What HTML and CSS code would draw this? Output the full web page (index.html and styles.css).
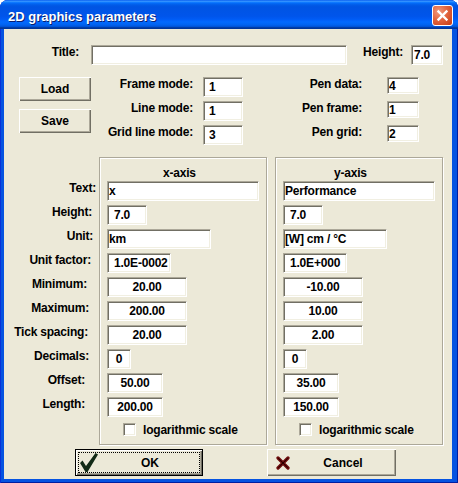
FILE: index.html
```html
<!DOCTYPE html>
<html>
<head>
<meta charset="utf-8">
<link rel="stylesheet" href="styles.css">
</head>
<body>
<div class="window">
  <div class="titlebar">
    <span class="title">2D graphics parameters</span>
    <div class="close">
      <svg width="19" height="19" viewBox="0 0 19 19"><path d="M5.5 5.5 L13.5 13.5 M13.5 5.5 L5.5 13.5" stroke="#fff" stroke-width="2.4" stroke-linecap="square"/></svg>
    </div>
  </div>
  <div class="client">
    <div class="row-title">
      <span class="lbl lbl-title">Title:</span>
      <input class="edit w256" value="">
      <span class="lbl lbl-height">Height:</span>
      <input class="edit w32 pad2" value="7.0">
    </div>

    <div class="mid">
      <div class="btncol">
        <button class="btn">Load</button>
        <button class="btn">Save</button>
      </div>
      <div class="modes">
        <div class="mrow"><span class="lbl mlbl">Frame mode:</span><input class="edit mode" value="1"></div>
        <div class="mrow"><span class="lbl mlbl">Line mode:</span><input class="edit mode" value="1"></div>
        <div class="mrow"><span class="lbl mlbl">Grid line mode:</span><input class="edit mode" value="3"></div>
      </div>
      <div class="pens">
        <div class="mrow"><span class="lbl plbl">Pen data:</span><input class="edit pen" value="4"></div>
        <div class="mrow"><span class="lbl plbl">Pen frame:</span><input class="edit pen" value="1"></div>
        <div class="mrow"><span class="lbl plbl">Pen grid:</span><input class="edit pen" value="2"></div>
      </div>
    </div>

    <div class="axes">
      <div class="labels">
        <div class="alabel r92">Text:</div>
        <div class="alabel r88">Height:</div>
        <div class="alabel r89">Unit:</div>
        <div class="alabel r87">Unit factor:</div>
        <div class="alabel r83">Minimum:</div>
        <div class="alabel r85">Maximum:</div>
        <div class="alabel r84">Tick spacing:</div>
        <div class="alabel r85">Decimals:</div>
        <div class="alabel r81">Offset:</div>
        <div class="alabel r81">Length:</div>
      </div>

      <div class="group">
        <div class="gtitle gtx">x-axis</div>
        <div class="grow"><input class="edit w152" value="x"></div>
        <div class="grow"><input class="edit w40 hgt" value="7.0"></div>
        <div class="grow"><input class="edit w104" value="km"></div>
        <div class="grow"><input class="edit w64 fac" value="1.0E-0002"></div>
        <div class="grow"><input class="edit w80 num" value="20.00"></div>
        <div class="grow"><input class="edit w80 num" value="200.00"></div>
        <div class="grow"><input class="edit w80 num" value="20.00"></div>
        <div class="grow"><input class="edit w24 num" value="0"></div>
        <div class="grow"><input class="edit w56 num" value="50.00"></div>
        <div class="grow"><input class="edit w56 num" value="200.00"></div>
        <div class="crow"><span class="check"></span><span class="lbl">logarithmic scale</span></div>
      </div>

      <div class="group">
        <div class="gtitle gty">y-axis</div>
        <div class="grow"><input class="edit w152" value="Performance"></div>
        <div class="grow"><input class="edit w40 hgt" value="7.0"></div>
        <div class="grow"><input class="edit w104" value="[W] cm / °C"></div>
        <div class="grow"><input class="edit w64 fac" value="1.0E+000"></div>
        <div class="grow"><input class="edit w80 num" value="-10.00"></div>
        <div class="grow"><input class="edit w80 num" value="10.00"></div>
        <div class="grow"><input class="edit w80 num" value="2.00"></div>
        <div class="grow"><input class="edit w24 num" value="0"></div>
        <div class="grow"><input class="edit w56 num" value="35.00"></div>
        <div class="grow"><input class="edit w56 num" value="150.00"></div>
        <div class="crow"><span class="check"></span><span class="lbl">logarithmic scale</span></div>
      </div>
    </div>

    <div class="actions">
      <button class="bbtn default">
        <svg class="ico-ok" width="18" height="19" viewBox="0 0 18 19"><polygon points="0,10 2.5,7.5 6,13 15.5,0 18,1.5 7.5,19 5.5,19" fill="#122a16"/></svg>
        <span class="cap">OK</span>
      </button>
      <button class="bbtn cancel">
        <svg class="ico-x" width="14" height="14" viewBox="0 0 14 14"><path d="M2 2 L12 12 M12 2 L2 12" stroke="#6a0a0a" stroke-width="3.2" stroke-linecap="round"/><path d="M2.5 2.5 L11.5 11.5 M11.5 2.5 L2.5 11.5" stroke="#2a0000" stroke-width="1" stroke-linecap="round"/></svg>
        <span class="cap">Cancel</span>
      </button>
    </div>
  </div>
</div>
</body>
</html>
```

FILE: styles.css
```css
* { box-sizing: border-box; }
html, body { margin: 0; padding: 0; background: #fff; }
body { font: bold 12px "Liberation Sans", Arial, sans-serif; letter-spacing: -0.2px; color: #000; }

.window {
  width: 458px;
  height: 483px;
  display: flex;
  flex-direction: column;
  background: #0553e1;
  border-radius: 8px 8px 0 0;
  overflow: hidden;
  box-shadow: inset 1px 0 0 #0831d9, inset -1px 0 0 #001ea0, inset 0 -1px 0 #001ea0;
}

.titlebar {
  flex: none;
  height: 29px;
  display: flex;
  justify-content: space-between;
  align-items: flex-start;
  padding: 0 5px 0 8px;
  background: linear-gradient(#0058ee 0%, #3a93ff 4%, #288eff 6%, #127dff 8%, #036ffc 10%, #0262ee 14%, #0057e5 20%, #0054e3 24%, #0055eb 56%, #005bf5 66%, #026afe 76%, #0062ef 86%, #0052d6 92%, #0040ab 94%, #003092 100%);
}

.title {
  margin-top: 9px;
  font: bold 13px/15px "Liberation Sans", Arial, sans-serif;
  letter-spacing: 0;
  color: #fff;
  text-shadow: 1px 1px 0 #0a1e6e;
}

.close {
  margin-top: 5px;
  width: 21px;
  height: 21px;
  border: 1px solid #fff;
  border-radius: 3px;
  background: radial-gradient(circle at 30% 30%, #f09a7e 0%, #e2653f 45%, #c63a12 100%);
  display: flex;
  align-items: center;
  justify-content: center;
}

.client {
  flex: 1;
  margin: 0 6px 4px 4px;
  background: #ece9d8;
  padding-top: 16px;
}

.lbl { line-height: 14px; white-space: nowrap; }

.edit {
  height: 20px;
  margin: 0;
  padding: 0 0 0 1px;
  border: 1px solid;
  border-color: #aca899 #fff #fff #aca899;
  box-shadow: inset 1px 1px 0 #716f64, inset -1px -1px 0 #f1efe2;
  background: #fff;
  font: bold 12px "Liberation Sans", Arial, sans-serif;
  letter-spacing: -0.2px;
  color: #000;
  outline: none;
  border-radius: 0;
}

.w256 { width: 256px; }
.w152 { width: 152px; }
.w104 { width: 104px; }
.w80 { width: 80px; }
.w64 { width: 64px; }
.w56 { width: 56px; }
.w40 { width: 40px; }
.w32 { width: 32px; }
.w24 { width: 24px; }
.pad2 { padding-left: 2px; }
.hgt { padding-left: 6px; }
.fac { padding-left: 6px; }
.num { text-align: center; padding: 0; }

.row-title {
  display: flex;
  align-items: flex-start;
  height: 20px;
}
.lbl-title { width: 75px; text-align: right; margin-right: 12px; }
.lbl-height { width: 56px; text-align: right; margin-right: 8px; }

.mid {
  display: flex;
  margin-top: 12px;
  padding-left: 15px;
  height: 72px;
}
.btncol {
  width: 72px;
  display: flex;
  flex-direction: column;
  gap: 8px;
}
.btn {
  width: 72px;
  height: 24px;
  margin: 0;
  padding: 0;
  border: none;
  background: #ece9d8;
  box-shadow: inset 1px 1px 0 #fff, inset -1px -1px 0 #716f64, inset -2px -2px 0 #aca899;
  font: bold 12px "Liberation Sans", Arial, sans-serif;
  color: #000;
}

.mrow {
  height: 24px;
  display: flex;
  align-items: flex-start;
}
.mlbl { width: 102px; text-align: right; margin-right: 10px; }
.mode { width: 40px; height: 20px; padding-left: 5px; }
.plbl { width: 119px; text-align: right; margin-right: 25px; }
.pen { width: 32px; height: 17px; padding-left: 1px; }

.axes {
  display: flex;
  margin-top: 8px;
}
.labels {
  width: 95px;
  padding-top: 24px;
}
.alabel {
  height: 24px;
  line-height: 14px;
  text-align: right;
  white-space: nowrap;
}
.r92 { padding-right: 3px; }
.r89 { padding-right: 6px; }
.r88 { padding-right: 7px; }
.r87 { padding-right: 8px; }
.r85 { padding-right: 10px; }
.r84 { padding-right: 11px; }
.r83 { padding-right: 12px; }
.r81 { padding-right: 14px; }

.group {
  width: 168px;
  height: 288px;
  border: 1px solid #aca899;
  box-shadow: 1px 1px 0 #fff, inset 1px 1px 0 #fff;
}
.group + .group { margin-left: 8px; }

.gtitle {
  height: 23px;
  padding-top: 8px;
  line-height: 14px;
}
.gtx { padding-left: 63px; }
.gty { padding-left: 58px; }

.grow {
  height: 24px;
  padding-left: 7px;
}

.crow {
  display: flex;
  align-items: flex-start;
  gap: 7px;
  padding: 2px 0 0 23px;
}
.check {
  width: 13px;
  height: 13px;
  background: #fff;
  border: 1px solid;
  border-color: #aca899 #fff #fff #aca899;
  box-shadow: inset 1px 1px 0 #716f64, inset -1px -1px 0 #f1efe2;
}

.actions {
  display: flex;
  margin-top: 4px;
  padding-left: 71px;
  gap: 64px;
}
.bbtn {
  width: 128px;
  height: 27px;
  margin: 0;
  padding: 0;
  border: none;
  display: flex;
  align-items: center;
  background: #ece9d8;
  box-shadow: inset 1px 1px 0 #fff, inset -1px -1px 0 #716f64, inset -2px -2px 0 #aca899;
  font: bold 12px "Liberation Sans", Arial, sans-serif;
  color: #000;
}
.bbtn.default {
  border: 1px solid #000;
  outline: 1px dotted #000;
  outline-offset: -4px;
}
.bbtn.cancel { width: 129px; }
.ico-ok { margin-left: 4px; flex: none; }
.ico-x { margin-left: 9px; flex: none; }
.cap { flex: 1; text-align: center; }
```
